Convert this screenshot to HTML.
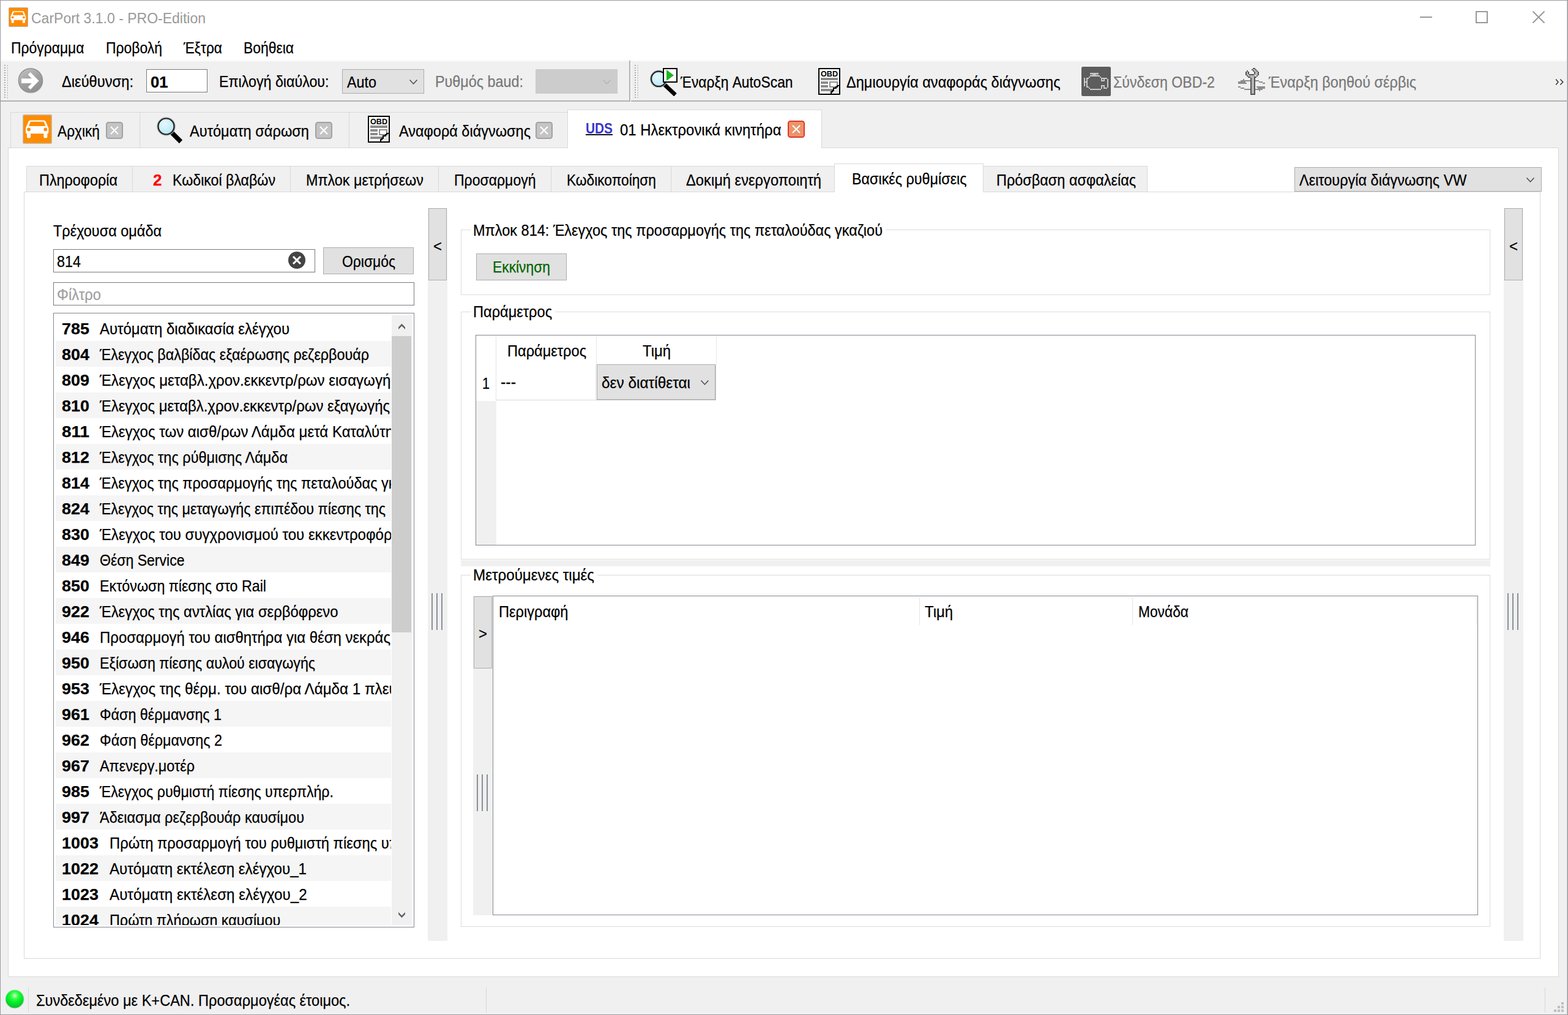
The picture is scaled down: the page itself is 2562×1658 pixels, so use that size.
<!DOCTYPE html>
<html lang="el"><head><meta charset="utf-8"><title>CarPort 3.1.0 - PRO-Edition</title>
<style>
html,body{margin:0;padding:0}
body{width:2562px;height:1658px;position:relative;overflow:hidden;background:#fff;font-family:"Liberation Sans", sans-serif;}
.a{position:absolute;box-sizing:border-box}
.t{position:absolute;white-space:pre;transform-origin:0 0;display:block;-webkit-text-stroke:0.25px currentColor}
</style></head>
<body>
<div class="a" style="left:0px;top:0px;width:2562px;height:1658px;background:#ffffff;"></div>
<div class="a" style="left:0px;top:98px;width:2562px;height:1px;background:#f6f6f6;"></div>
<div class="a" style="left:0px;top:100px;width:2562px;height:64px;background:#f0f0f0;"></div>
<div class="a" style="left:0px;top:164px;width:2562px;height:2px;background:#b2b2b2;"></div>
<div class="a" style="left:0px;top:166px;width:2562px;height:1492px;background:#f0f0f0;"></div>
<div class="a" style="left:1028px;top:99px;width:2px;height:67px;background:#b2b2b2;"></div>
<div class="a" style="left:1030px;top:99px;width:1px;height:67px;background:#ffffff;"></div>
<svg class="a" style="left:14px;top:12px" width="32" height="32" viewBox="0 0 32 32"><rect x="0.5" y="0.5" width="31" height="31" rx="1" fill="#ff8c00" stroke="#b9b3ab" stroke-width="1"/><path d="M3.6 14.2 L6.4 7.6 Q7 6.3 8.4 6.3 L23.2 6.3 Q24.6 6.3 25.2 7.6 L27.9 14.2 Q28.3 15 28.3 16 L28.2 19.6 Q28.2 20.8 27 20.8 L4.6 20.8 Q3.4 20.8 3.4 19.6 L3.3 16 Q3.3 15 3.6 14.2 Z" fill="#fff"/><path d="M6.6 12.7 L8.4 8.3 Q8.6 7.8 9.2 7.8 L22.4 7.8 Q23 7.8 23.2 8.3 L25 12.7 Z" fill="#ff8c00"/><circle cx="6.7" cy="16.3" r="1.9" fill="#ff8c00"/><circle cx="24.9" cy="16.3" r="1.9" fill="#ff8c00"/><path d="M4.7 20.5 L8.7 20.5 L8.7 24.4 Q8.7 25.6 7.5 25.6 L5.9 25.6 Q4.7 25.6 4.7 24.4 Z" fill="#fff"/><path d="M22.9 20.5 L26.9 20.5 L26.9 24.4 Q26.9 25.6 25.7 25.6 L24.1 25.6 Q22.9 25.6 22.9 24.4 Z" fill="#fff"/></svg>
<span class="t " style="left:51px;top:15px;font-size:23px;line-height:30px;color:#999999;transform:scaleX(0.9998);-webkit-text-stroke:0;">CarPort 3.1.0 - PRO-Edition</span>
<div class="a" style="left:2320px;top:27px;width:20px;height:2px;background:#999999;"></div>
<div class="a" style="left:2411px;top:18px;width:20px;height:20px;border:2px solid #999999;"></div>
<svg class="a" style="left:2504px;top:18px;" width="20" height="20" viewBox="0 0 20 20"><path d="M0.5 0.5L19.5 19.5M19.5 0.5L0.5 19.5" stroke="#999999" stroke-width="2" fill="none"/></svg>
<span class="t " style="left:18px;top:63px;font-size:25px;line-height:30px;color:#000;transform:scaleX(0.9148);">Πρόγραμμα</span>
<span class="t " style="left:173px;top:63px;font-size:25px;line-height:30px;color:#000;transform:scaleX(0.9164);">Προβολή</span>
<span class="t " style="left:300px;top:63px;font-size:25px;line-height:30px;color:#000;transform:scaleX(0.9083);">Έξτρα</span>
<span class="t " style="left:398px;top:63px;font-size:25px;line-height:30px;color:#000;transform:scaleX(0.9157);">Βοήθεια</span>
<svg class="a" style="left:7px;top:106px" width="8" height="58" viewBox="0 0 8 58"><rect x="1" y="1" width="2" height="2" fill="#fff"/><rect x="0" y="0" width="2" height="2" fill="#ababab"/><rect x="5" y="1.5" width="1.5" height="1.5" fill="#fff"/><rect x="4.5" y="0.5" width="1.5" height="2" fill="#bcbcbc"/><rect x="1" y="5" width="2" height="2" fill="#fff"/><rect x="0" y="4" width="2" height="2" fill="#ababab"/><rect x="5" y="5.5" width="1.5" height="1.5" fill="#fff"/><rect x="4.5" y="4.5" width="1.5" height="2" fill="#bcbcbc"/><rect x="1" y="9" width="2" height="2" fill="#fff"/><rect x="0" y="8" width="2" height="2" fill="#ababab"/><rect x="5" y="9.5" width="1.5" height="1.5" fill="#fff"/><rect x="4.5" y="8.5" width="1.5" height="2" fill="#bcbcbc"/><rect x="1" y="13" width="2" height="2" fill="#fff"/><rect x="0" y="12" width="2" height="2" fill="#ababab"/><rect x="5" y="13.5" width="1.5" height="1.5" fill="#fff"/><rect x="4.5" y="12.5" width="1.5" height="2" fill="#bcbcbc"/><rect x="1" y="17" width="2" height="2" fill="#fff"/><rect x="0" y="16" width="2" height="2" fill="#ababab"/><rect x="5" y="17.5" width="1.5" height="1.5" fill="#fff"/><rect x="4.5" y="16.5" width="1.5" height="2" fill="#bcbcbc"/><rect x="1" y="21" width="2" height="2" fill="#fff"/><rect x="0" y="20" width="2" height="2" fill="#ababab"/><rect x="5" y="21.5" width="1.5" height="1.5" fill="#fff"/><rect x="4.5" y="20.5" width="1.5" height="2" fill="#bcbcbc"/><rect x="1" y="25" width="2" height="2" fill="#fff"/><rect x="0" y="24" width="2" height="2" fill="#ababab"/><rect x="5" y="25.5" width="1.5" height="1.5" fill="#fff"/><rect x="4.5" y="24.5" width="1.5" height="2" fill="#bcbcbc"/><rect x="1" y="29" width="2" height="2" fill="#fff"/><rect x="0" y="28" width="2" height="2" fill="#ababab"/><rect x="5" y="29.5" width="1.5" height="1.5" fill="#fff"/><rect x="4.5" y="28.5" width="1.5" height="2" fill="#bcbcbc"/><rect x="1" y="33" width="2" height="2" fill="#fff"/><rect x="0" y="32" width="2" height="2" fill="#ababab"/><rect x="5" y="33.5" width="1.5" height="1.5" fill="#fff"/><rect x="4.5" y="32.5" width="1.5" height="2" fill="#bcbcbc"/><rect x="1" y="37" width="2" height="2" fill="#fff"/><rect x="0" y="36" width="2" height="2" fill="#ababab"/><rect x="5" y="37.5" width="1.5" height="1.5" fill="#fff"/><rect x="4.5" y="36.5" width="1.5" height="2" fill="#bcbcbc"/><rect x="1" y="41" width="2" height="2" fill="#fff"/><rect x="0" y="40" width="2" height="2" fill="#ababab"/><rect x="5" y="41.5" width="1.5" height="1.5" fill="#fff"/><rect x="4.5" y="40.5" width="1.5" height="2" fill="#bcbcbc"/><rect x="1" y="45" width="2" height="2" fill="#fff"/><rect x="0" y="44" width="2" height="2" fill="#ababab"/><rect x="5" y="45.5" width="1.5" height="1.5" fill="#fff"/><rect x="4.5" y="44.5" width="1.5" height="2" fill="#bcbcbc"/><rect x="1" y="49" width="2" height="2" fill="#fff"/><rect x="0" y="48" width="2" height="2" fill="#ababab"/><rect x="5" y="49.5" width="1.5" height="1.5" fill="#fff"/><rect x="4.5" y="48.5" width="1.5" height="2" fill="#bcbcbc"/><rect x="1" y="53" width="2" height="2" fill="#fff"/><rect x="0" y="52" width="2" height="2" fill="#ababab"/><rect x="5" y="53.5" width="1.5" height="1.5" fill="#fff"/><rect x="4.5" y="52.5" width="1.5" height="2" fill="#bcbcbc"/></svg>
<svg class="a" style="left:29px;top:111px" width="42" height="42" viewBox="0 0 42 42"><defs><linearGradient id="gg" x1="0.2" y1="0" x2="0.8" y2="1"><stop offset="0" stop-color="#c0c0c0"/><stop offset="0.5" stop-color="#a0a0a0"/><stop offset="1" stop-color="#8e8e8e"/></linearGradient></defs><circle cx="21.6" cy="21.8" r="20" fill="#d8d8d8"/><circle cx="20.9" cy="20.4" r="19.6" fill="url(#gg)" stroke="#8a8a8a" stroke-width="1.2"/><path d="M6 17.3 L26 17.3 L26 25 L6 25 Z" fill="#fff"/><path d="M18.7 9 L30.6 21.1 L18.7 33.2" stroke="#fff" stroke-width="5.6" fill="none" stroke-linejoin="miter"/></svg>
<span class="t " style="left:101px;top:118px;font-size:25px;line-height:30px;color:#000;transform:scaleX(0.9478);">Διεύθυνση:</span>
<div class="a" style="left:239px;top:113px;width:100px;height:38px;background:#fff;border:1px solid #7a7a7a;"></div>
<span class="t " style="left:246px;top:119px;font-size:25px;line-height:30px;color:#000;font-weight:bold;transform:scaleX(1.0247);">01</span>
<span class="t " style="left:358px;top:118px;font-size:25px;line-height:30px;color:#000;transform:scaleX(0.9296);">Επιλογή διαύλου:</span>
<div class="a" style="left:559px;top:113px;width:134px;height:40px;background:#e1e1e1;border:1px solid #adadad;"></div>
<span class="t " style="left:567px;top:119px;font-size:25px;line-height:30px;color:#000;transform:scaleX(0.9332);">Auto</span>
<svg class="a" style="left:669px;top:130px" width="13" height="9" viewBox="0 0 13 9"><path d="M0.5 0.5 L6.5 7 L12.5 0.5" stroke="#444" stroke-width="1.4" fill="none"/></svg>
<span class="t " style="left:711px;top:118px;font-size:25px;line-height:30px;color:#787878;transform:scaleX(0.9343);">Ρυθμός baud:</span>
<div class="a" style="left:875px;top:113px;width:134px;height:40px;background:#cccccc;"></div>
<svg class="a" style="left:985px;top:130px" width="13" height="9" viewBox="0 0 13 9"><path d="M0.5 0.5 L6.5 7 L12.5 0.5" stroke="#b4b4b4" stroke-width="1.4" fill="none"/></svg>
<svg class="a" style="left:1037px;top:106px" width="8" height="58" viewBox="0 0 8 58"><rect x="1" y="1" width="2" height="2" fill="#fff"/><rect x="0" y="0" width="2" height="2" fill="#ababab"/><rect x="5" y="1.5" width="1.5" height="1.5" fill="#fff"/><rect x="4.5" y="0.5" width="1.5" height="2" fill="#bcbcbc"/><rect x="1" y="5" width="2" height="2" fill="#fff"/><rect x="0" y="4" width="2" height="2" fill="#ababab"/><rect x="5" y="5.5" width="1.5" height="1.5" fill="#fff"/><rect x="4.5" y="4.5" width="1.5" height="2" fill="#bcbcbc"/><rect x="1" y="9" width="2" height="2" fill="#fff"/><rect x="0" y="8" width="2" height="2" fill="#ababab"/><rect x="5" y="9.5" width="1.5" height="1.5" fill="#fff"/><rect x="4.5" y="8.5" width="1.5" height="2" fill="#bcbcbc"/><rect x="1" y="13" width="2" height="2" fill="#fff"/><rect x="0" y="12" width="2" height="2" fill="#ababab"/><rect x="5" y="13.5" width="1.5" height="1.5" fill="#fff"/><rect x="4.5" y="12.5" width="1.5" height="2" fill="#bcbcbc"/><rect x="1" y="17" width="2" height="2" fill="#fff"/><rect x="0" y="16" width="2" height="2" fill="#ababab"/><rect x="5" y="17.5" width="1.5" height="1.5" fill="#fff"/><rect x="4.5" y="16.5" width="1.5" height="2" fill="#bcbcbc"/><rect x="1" y="21" width="2" height="2" fill="#fff"/><rect x="0" y="20" width="2" height="2" fill="#ababab"/><rect x="5" y="21.5" width="1.5" height="1.5" fill="#fff"/><rect x="4.5" y="20.5" width="1.5" height="2" fill="#bcbcbc"/><rect x="1" y="25" width="2" height="2" fill="#fff"/><rect x="0" y="24" width="2" height="2" fill="#ababab"/><rect x="5" y="25.5" width="1.5" height="1.5" fill="#fff"/><rect x="4.5" y="24.5" width="1.5" height="2" fill="#bcbcbc"/><rect x="1" y="29" width="2" height="2" fill="#fff"/><rect x="0" y="28" width="2" height="2" fill="#ababab"/><rect x="5" y="29.5" width="1.5" height="1.5" fill="#fff"/><rect x="4.5" y="28.5" width="1.5" height="2" fill="#bcbcbc"/><rect x="1" y="33" width="2" height="2" fill="#fff"/><rect x="0" y="32" width="2" height="2" fill="#ababab"/><rect x="5" y="33.5" width="1.5" height="1.5" fill="#fff"/><rect x="4.5" y="32.5" width="1.5" height="2" fill="#bcbcbc"/><rect x="1" y="37" width="2" height="2" fill="#fff"/><rect x="0" y="36" width="2" height="2" fill="#ababab"/><rect x="5" y="37.5" width="1.5" height="1.5" fill="#fff"/><rect x="4.5" y="36.5" width="1.5" height="2" fill="#bcbcbc"/><rect x="1" y="41" width="2" height="2" fill="#fff"/><rect x="0" y="40" width="2" height="2" fill="#ababab"/><rect x="5" y="41.5" width="1.5" height="1.5" fill="#fff"/><rect x="4.5" y="40.5" width="1.5" height="2" fill="#bcbcbc"/><rect x="1" y="45" width="2" height="2" fill="#fff"/><rect x="0" y="44" width="2" height="2" fill="#ababab"/><rect x="5" y="45.5" width="1.5" height="1.5" fill="#fff"/><rect x="4.5" y="44.5" width="1.5" height="2" fill="#bcbcbc"/><rect x="1" y="49" width="2" height="2" fill="#fff"/><rect x="0" y="48" width="2" height="2" fill="#ababab"/><rect x="5" y="49.5" width="1.5" height="1.5" fill="#fff"/><rect x="4.5" y="48.5" width="1.5" height="2" fill="#bcbcbc"/><rect x="1" y="53" width="2" height="2" fill="#fff"/><rect x="0" y="52" width="2" height="2" fill="#ababab"/><rect x="5" y="53.5" width="1.5" height="1.5" fill="#fff"/><rect x="4.5" y="52.5" width="1.5" height="2" fill="#bcbcbc"/></svg>
<svg class="a" style="left:1060px;top:109px" width="48" height="48" viewBox="0 0 48 48"><defs><radialGradient id="lens2" cx="0.4" cy="0.35" r="0.7"><stop offset="0" stop-color="#e6f8fd"/><stop offset="1" stop-color="#b4e6f5"/></radialGradient></defs><path d="M25.5 29 L43.5 46" stroke="#000" stroke-width="6.6" stroke-linecap="butt"/><circle cx="16.3" cy="19.8" r="13.6" fill="none" stroke="#b0b0b0" stroke-width="1.4"/><circle cx="16.3" cy="19.8" r="12.2" fill="url(#lens2)" stroke="#222" stroke-width="2.2"/><rect x="24" y="3" width="22" height="22" fill="#fff" stroke="#000" stroke-width="2"/><path d="M29 5 L29 23 L41 14 Z" fill="#1fb41f"/></svg>
<span class="t " style="left:1112px;top:119px;font-size:25px;line-height:30px;color:#000;transform:scaleX(0.9119);">Έναρξη AutoScan</span>
<svg class="a" style="left:1337px;top:111px;overflow:visible" width="36" height="44" viewBox="0 0 36 44"><rect x="-1" y="-1" width="38" height="46" fill="#fff" opacity="0.9"/><rect x="1" y="1" width="34" height="42" fill="#fff" stroke="#000" stroke-width="2"/><path d="M22 42 L34 30 L34 42 Z" fill="#e4e4e4"/><text x="4" y="14.2" font-family="Liberation Sans, sans-serif" font-size="13.5" font-weight="bold" fill="#000" textLength="28" lengthAdjust="spacingAndGlyphs">OBD</text><rect x="4" y="16" width="28" height="4" fill="#8c8c8c"/><rect x="4" y="22" width="12" height="4" fill="#8c8c8c"/><rect x="4" y="28" width="12" height="4" fill="#8c8c8c"/><rect x="4" y="34" width="20" height="4" fill="#8c8c8c"/><rect x="19" y="23" width="12" height="8" fill="#fff" stroke="#8c8c8c" stroke-width="2"/><path d="M34 29 L31 29 L31 31 L29 31 L29 33 L25 33 L25 37 L23 37 L23 39 L21 39 L21 42" stroke="#000" stroke-width="2" fill="none" shape-rendering="crispEdges"/></svg>
<span class="t " style="left:1383px;top:119px;font-size:25px;line-height:30px;color:#000;transform:scaleX(0.9425);">Δημιουργία αναφοράς διάγνωσης</span>
<svg class="a" style="left:1767px;top:109px" width="48" height="48" viewBox="0 0 48 48" shape-rendering="crispEdges"><rect x="0" y="0" width="48" height="48" rx="2.5" fill="#5d5d5d" shape-rendering="auto"/><rect x="14" y="10" width="14" height="2" fill="#c8c8c8"/><rect x="18" y="12" width="6" height="2" fill="#c0c0c0"/><rect x="14" y="12" width="4" height="2" fill="#8a8a8a"/><rect x="24" y="12" width="4" height="2" fill="#8a8a8a"/><rect x="14" y="14" width="16" height="2" fill="#c8c8c8"/><rect x="12" y="16" width="2" height="2" fill="#c8c8c8"/><rect x="30" y="16" width="2" height="2" fill="#c8c8c8"/><rect x="4" y="18" width="2" height="14" fill="#c8c8c8"/><rect x="6" y="24" width="2" height="2" fill="#c8c8c8"/><rect x="8" y="18" width="2" height="16" fill="#c8c8c8"/><rect x="10" y="18" width="2" height="2" fill="#c8c8c8"/><rect x="10" y="32" width="2" height="2" fill="#c8c8c8"/><rect x="12" y="34" width="2" height="2" fill="#c8c8c8"/><rect x="14" y="36" width="18" height="2" fill="#c8c8c8"/><rect x="32" y="18" width="10" height="2" fill="#c8c8c8"/><rect x="32" y="18" width="2" height="6" fill="#c8c8c8"/><rect x="32" y="22" width="6" height="2" fill="#c8c8c8"/><rect x="36" y="20" width="2" height="4" fill="#c8c8c8"/><rect x="42" y="20" width="2" height="14" fill="#c8c8c8"/><rect x="36" y="34" width="6" height="2" fill="#c8c8c8"/><rect x="32" y="30" width="6" height="2" fill="#c8c8c8"/><rect x="32" y="30" width="2" height="6" fill="#c8c8c8"/><rect x="36" y="30" width="2" height="6" fill="#c8c8c8"/></svg>
<span class="t " style="left:1819px;top:119px;font-size:25px;line-height:30px;color:#787878;transform:scaleX(0.9254);">Σύνδεση OBD-2</span>
<svg class="a" style="left:2021px;top:109px" width="48" height="48" viewBox="0 0 48 48" shape-rendering="crispEdges"><rect x="10" y="20" width="2" height="2" fill="#8c8c8c"/><rect x="6" y="22" width="16" height="2" fill="#8c8c8c"/><rect x="2" y="24" width="12" height="2" fill="#8c8c8c"/><rect x="2" y="26" width="14" height="2" fill="#8c8c8c"/><rect x="30" y="22" width="6" height="2" fill="#8c8c8c"/><rect x="36" y="24" width="6" height="2" fill="#8c8c8c"/><rect x="42" y="26" width="4" height="2" fill="#8c8c8c"/><rect x="2" y="32" width="4" height="2" fill="#8c8c8c"/><rect x="6" y="34" width="6" height="2" fill="#8c8c8c"/><rect x="12" y="36" width="30" height="2" fill="#8c8c8c"/><rect x="32" y="32" width="14" height="2" fill="#8c8c8c"/><rect x="34" y="34" width="12" height="2" fill="#8c8c8c"/><rect x="36" y="38" width="2" height="2" fill="#8c8c8c"/><rect x="26" y="4" width="4" height="2" fill="#b6b6b6"/><rect x="28" y="6" width="4" height="2" fill="#b6b6b6"/><rect x="16" y="8" width="2" height="6" fill="#b6b6b6"/><rect x="30" y="8" width="4" height="6" fill="#b6b6b6"/><rect x="18" y="12" width="2" height="4" fill="#b6b6b6"/><rect x="20" y="14" width="10" height="2" fill="#b6b6b6"/><rect x="28" y="12" width="2" height="2" fill="#b6b6b6"/><rect x="22" y="16" width="6" height="2" fill="#b6b6b6"/><rect x="24" y="18" width="4" height="26" fill="#b6b6b6"/><rect x="26" y="2" width="4" height="2" fill="#555555"/><rect x="24" y="4" width="2" height="2" fill="#555555"/><rect x="30" y="4" width="2" height="2" fill="#555555"/><rect x="16" y="6" width="2" height="2" fill="#555555"/><rect x="26" y="6" width="2" height="2" fill="#555555"/><rect x="32" y="6" width="2" height="2" fill="#555555"/><rect x="14" y="8" width="2" height="6" fill="#555555"/><rect x="18" y="8" width="2" height="4" fill="#555555"/><rect x="28" y="8" width="2" height="4" fill="#555555"/><rect x="34" y="8" width="2" height="6" fill="#555555"/><rect x="20" y="12" width="8" height="2" fill="#555555"/><rect x="16" y="14" width="2" height="2" fill="#555555"/><rect x="32" y="14" width="2" height="2" fill="#555555"/><rect x="18" y="16" width="4" height="2" fill="#555555"/><rect x="28" y="16" width="4" height="2" fill="#555555"/><rect x="22" y="18" width="2" height="28" fill="#555555"/><rect x="28" y="18" width="2" height="28" fill="#555555"/><rect x="22" y="44" width="8" height="2" fill="#555555"/></svg>
<span class="t " style="left:2073px;top:119px;font-size:25px;line-height:30px;color:#787878;transform:scaleX(0.9406);">Έναρξη βοηθού σέρβις</span>
<svg class="a" style="left:2540px;top:127px;" width="16" height="14" viewBox="0 0 16 14"><path d="M2.2 2.5 L6 7 L2.2 11.5 M9.4 2.5 L13.8 7 L9.4 11.5" stroke="#333" stroke-width="1.5" fill="none"/></svg>
<div class="a" style="left:17px;top:183px;width:212px;height:59px;background:#f0f0f0;border:1px solid #d9d9d9;"></div>
<div class="a" style="left:228px;top:183px;width:343px;height:59px;background:#f0f0f0;border:1px solid #d9d9d9;"></div>
<div class="a" style="left:570px;top:183px;width:358px;height:59px;background:#f0f0f0;border:1px solid #d9d9d9;"></div>
<div class="a" style="left:13px;top:241px;width:2534px;height:1355px;background:#ffffff;border:1px solid #d9d9d9;"></div>
<div class="a" style="left:927px;top:179px;width:416px;height:63px;background:#ffffff;border:1px solid #d9d9d9;border-bottom:none;"></div>
<svg class="a" style="left:37px;top:187px" width="48" height="48" viewBox="0 0 32 32"><rect x="0.5" y="0.5" width="31" height="31" rx="1" fill="#ff8c00" stroke="#c8b8a0" stroke-width="1"/><path d="M3.6 14.2 L6.4 7.6 Q7 6.3 8.4 6.3 L23.2 6.3 Q24.6 6.3 25.2 7.6 L27.9 14.2 Q28.3 15 28.3 16 L28.2 19.6 Q28.2 20.8 27 20.8 L4.6 20.8 Q3.4 20.8 3.4 19.6 L3.3 16 Q3.3 15 3.6 14.2 Z" fill="#fff"/><path d="M6.6 12.7 L8.4 8.3 Q8.6 7.8 9.2 7.8 L22.4 7.8 Q23 7.8 23.2 8.3 L25 12.7 Z" fill="#ff8c00"/><circle cx="6.7" cy="16.3" r="1.9" fill="#ff8c00"/><circle cx="24.9" cy="16.3" r="1.9" fill="#ff8c00"/><path d="M4.7 20.5 L8.7 20.5 L8.7 24.4 Q8.7 25.6 7.5 25.6 L5.9 25.6 Q4.7 25.6 4.7 24.4 Z" fill="#fff"/><path d="M22.9 20.5 L26.9 20.5 L26.9 24.4 Q26.9 25.6 25.7 25.6 L24.1 25.6 Q22.9 25.6 22.9 24.4 Z" fill="#fff"/></svg>
<span class="t " style="left:94px;top:199px;font-size:25px;line-height:30px;color:#000;transform:scaleX(0.9081);">Αρχική</span>
<svg class="a" style="left:173px;top:199px" width="28" height="28" viewBox="0 0 28 28"><rect x="1" y="1" width="26" height="26" rx="3.5" fill="#c4c4c4" stroke="#a2a2a2" stroke-width="2"/><path d="M8 8 L20 20 M20 8 L8 20" stroke="#fff" stroke-width="2.2" fill="none"/></svg>
<svg class="a" style="left:255px;top:190px" width="46" height="46" viewBox="0 0 46 46"><defs><radialGradient id="lens" cx="0.4" cy="0.35" r="0.7"><stop offset="0" stop-color="#e6f8fd"/><stop offset="1" stop-color="#b4e6f5"/></radialGradient></defs><path d="M25 26 L40.5 41.5" stroke="#000" stroke-width="7.5" stroke-linecap="butt"/><circle cx="16.5" cy="16.5" r="14.6" fill="none" stroke="#b0b0b0" stroke-width="1.4"/><circle cx="16.5" cy="16.5" r="13" fill="url(#lens)" stroke="#222" stroke-width="2.2"/></svg>
<span class="t " style="left:310px;top:199px;font-size:25px;line-height:30px;color:#000;transform:scaleX(0.9435);">Αυτόματη σάρωση</span>
<svg class="a" style="left:515px;top:199px" width="28" height="28" viewBox="0 0 28 28"><rect x="1" y="1" width="26" height="26" rx="3.5" fill="#c4c4c4" stroke="#a2a2a2" stroke-width="2"/><path d="M8 8 L20 20 M20 8 L8 20" stroke="#fff" stroke-width="2.2" fill="none"/></svg>
<svg class="a" style="left:601px;top:189px;overflow:visible" width="36" height="44" viewBox="0 0 36 44"><rect x="1" y="1" width="34" height="42" fill="#fff" stroke="#000" stroke-width="2"/><path d="M22 42 L34 30 L34 42 Z" fill="#e4e4e4"/><text x="4" y="14.2" font-family="Liberation Sans, sans-serif" font-size="13.5" font-weight="bold" fill="#000" textLength="28" lengthAdjust="spacingAndGlyphs">OBD</text><rect x="4" y="16" width="28" height="4" fill="#8c8c8c"/><rect x="4" y="22" width="12" height="4" fill="#8c8c8c"/><rect x="4" y="28" width="12" height="4" fill="#8c8c8c"/><rect x="4" y="34" width="20" height="4" fill="#8c8c8c"/><rect x="19" y="23" width="12" height="8" fill="#fff" stroke="#8c8c8c" stroke-width="2"/><path d="M34 29 L31 29 L31 31 L29 31 L29 33 L25 33 L25 37 L23 37 L23 39 L21 39 L21 42" stroke="#000" stroke-width="2" fill="none" shape-rendering="crispEdges"/></svg>
<span class="t " style="left:652px;top:199px;font-size:25px;line-height:30px;color:#000;transform:scaleX(0.9399);">Αναφορά διάγνωσης</span>
<svg class="a" style="left:875px;top:199px" width="28" height="28" viewBox="0 0 28 28"><rect x="1" y="1" width="26" height="26" rx="3.5" fill="#c4c4c4" stroke="#a2a2a2" stroke-width="2"/><path d="M8 8 L20 20 M20 8 L8 20" stroke="#fff" stroke-width="2.2" fill="none"/></svg>
<span class="t " style="left:957px;top:195px;font-size:23px;line-height:30px;color:#3737c8;font-weight:bold;transform:scaleX(0.9060);-webkit-text-stroke:0;">UDS</span>
<div class="a" style="left:957px;top:219px;width:44px;height:2px;background:#101018;"></div>
<span class="t " style="left:1012.5px;top:197px;font-size:25px;line-height:30px;color:#000;transform:scaleX(0.9564);">01 Ηλεκτρονικά κινητήρα</span>
<svg class="a" style="left:1287px;top:197px" width="28" height="28" viewBox="0 0 28 28"><rect x="1" y="1" width="26" height="26" rx="3.5" fill="#ec9469" stroke="#e0382c" stroke-width="2"/><path d="M8 8 L20 20 M20 8 L8 20" stroke="#fff" stroke-width="2.2" fill="none"/></svg>
<div class="a" style="left:43px;top:271px;width:174px;height:43px;background:#f0f0f0;border:1px solid #d9d9d9;"></div>
<div class="a" style="left:216px;top:271px;width:259px;height:43px;background:#f0f0f0;border:1px solid #d9d9d9;"></div>
<div class="a" style="left:474px;top:271px;width:243px;height:43px;background:#f0f0f0;border:1px solid #d9d9d9;"></div>
<div class="a" style="left:716px;top:271px;width:185px;height:43px;background:#f0f0f0;border:1px solid #d9d9d9;"></div>
<div class="a" style="left:900px;top:271px;width:197px;height:43px;background:#f0f0f0;border:1px solid #d9d9d9;"></div>
<div class="a" style="left:1096px;top:271px;width:268px;height:43px;background:#f0f0f0;border:1px solid #d9d9d9;"></div>
<div class="a" style="left:1606px;top:271px;width:269px;height:43px;background:#f0f0f0;border:1px solid #d9d9d9;"></div>
<div class="a" style="left:39px;top:313px;width:2478px;height:1253px;background:#ffffff;border:1px solid #d9d9d9;"></div>
<div class="a" style="left:1363px;top:267px;width:244px;height:47px;background:#ffffff;border:1px solid #d9d9d9;border-bottom:none;"></div>
<span class="t " style="left:64px;top:279px;font-size:25px;line-height:30px;color:#000;transform:scaleX(0.9347);">Πληροφορία</span>
<span class="t " style="left:250px;top:279px;font-size:25px;line-height:30px;color:#ff0000;font-weight:bold;transform:scaleX(1.0427);">2</span>
<span class="t " style="left:282px;top:279px;font-size:25px;line-height:30px;color:#000;transform:scaleX(0.9266);">Κωδικοί βλαβών</span>
<span class="t " style="left:500px;top:279px;font-size:25px;line-height:30px;color:#000;transform:scaleX(0.9334);">Μπλοκ μετρήσεων</span>
<span class="t " style="left:742px;top:279px;font-size:25px;line-height:30px;color:#000;transform:scaleX(0.9207);">Προσαρμογή</span>
<span class="t " style="left:926px;top:279px;font-size:25px;line-height:30px;color:#000;transform:scaleX(0.9085);">Κωδικοποίηση</span>
<span class="t " style="left:1121px;top:279px;font-size:25px;line-height:30px;color:#000;transform:scaleX(0.9484);">Δοκιμή ενεργοποιητή</span>
<span class="t " style="left:1392px;top:277px;font-size:25px;line-height:30px;color:#000;transform:scaleX(0.9343);">Βασικές ρυθμίσεις</span>
<span class="t " style="left:1628px;top:279px;font-size:25px;line-height:30px;color:#000;transform:scaleX(0.9384);">Πρόσβαση ασφαλείας</span>
<div class="a" style="left:2115px;top:273px;width:404px;height:40px;background:#e1e1e1;border:1px solid #adadad;"></div>
<span class="t " style="left:2123px;top:279px;font-size:25px;line-height:30px;color:#000;transform:scaleX(0.9392);">Λειτουργία διάγνωσης VW</span>
<svg class="a" style="left:2494px;top:290px" width="13" height="9" viewBox="0 0 13 9"><path d="M0.5 0.5 L6.5 7 L12.5 0.5" stroke="#444" stroke-width="1.4" fill="none"/></svg>
<span class="t " style="left:87px;top:362px;font-size:25px;line-height:30px;color:#000;transform:scaleX(0.9384);">Τρέχουσα ομάδα</span>
<div class="a" style="left:87px;top:407px;width:428px;height:38px;background:#fff;border:1px solid #7a7a7a;"></div>
<span class="t " style="left:93px;top:412px;font-size:25px;line-height:30px;color:#000;transform:scaleX(0.9348);">814</span>
<svg class="a" style="left:471px;top:411px" width="28" height="28" viewBox="0 0 28 28"><circle cx="14" cy="14" r="14" fill="#444"/><path d="M8 8 L20 20 M20 8 L8 20" stroke="#fff" stroke-width="3.1" fill="none"/></svg>
<div class="a" style="left:528px;top:404px;width:148px;height:44px;background:#e1e1e1;border:1px solid #adadad;"></div>
<span class="t " style="left:559px;top:412px;font-size:25px;line-height:30px;color:#000;transform:scaleX(0.9156);">Ορισμός</span>
<div class="a" style="left:87px;top:461px;width:590px;height:38px;background:#fff;border:1px solid #7a7a7a;"></div>
<span class="t " style="left:93px;top:466px;font-size:25px;line-height:30px;color:#a0a0a0;transform:scaleX(0.9472);">Φίλτρο</span>
<div class="a" style="left:87px;top:511px;width:590px;height:1004px;background:#fff;border:1px solid #828790;"></div>
<div class="a" style="left:91px;top:515px;width:548px;height:996px;overflow:hidden">
<span class="t " style="left:10px;top:7px;font-size:25px;line-height:30px;color:#000;font-weight:bold;transform:scaleX(1.0787);">785</span>
<span class="t " style="left:71.5px;top:7px;font-size:25px;line-height:30px;color:#000;transform:scaleX(0.9584);">Αυτόματη διαδικασία ελέγχου</span>
<div class="a" style="left:0px;top:42px;width:548px;height:42px;background:#f5f5f5;"></div>
<span class="t " style="left:10px;top:49px;font-size:25px;line-height:30px;color:#000;font-weight:bold;transform:scaleX(1.0787);">804</span>
<span class="t " style="left:71.5px;top:49px;font-size:25px;line-height:30px;color:#000;transform:scaleX(0.9333);">Έλεγχος βαλβίδας εξαέρωσης ρεζερβουάρ</span>
<span class="t " style="left:10px;top:91px;font-size:25px;line-height:30px;color:#000;font-weight:bold;transform:scaleX(1.0787);">809</span>
<span class="t " style="left:71.5px;top:91px;font-size:25px;line-height:30px;color:#000;transform:scaleX(0.9618);">Έλεγχος μεταβλ.χρον.εκκεντρ/ρων εισαγωγής</span>
<div class="a" style="left:0px;top:126px;width:548px;height:42px;background:#f5f5f5;"></div>
<span class="t " style="left:10px;top:133px;font-size:25px;line-height:30px;color:#000;font-weight:bold;transform:scaleX(1.0787);">810</span>
<span class="t " style="left:71.5px;top:133px;font-size:25px;line-height:30px;color:#000;transform:scaleX(0.9561);">Έλεγχος μεταβλ.χρον.εκκεντρ/ρων εξαγωγής</span>
<span class="t " style="left:10px;top:175px;font-size:25px;line-height:30px;color:#000;font-weight:bold;transform:scaleX(1.1154);">811</span>
<span class="t " style="left:71.5px;top:175px;font-size:25px;line-height:30px;color:#000;transform:scaleX(0.9617);">Έλεγχος των αισθ/ρων Λάμδα μετά Καταλύτη</span>
<div class="a" style="left:0px;top:210px;width:548px;height:42px;background:#f5f5f5;"></div>
<span class="t " style="left:10px;top:217px;font-size:25px;line-height:30px;color:#000;font-weight:bold;transform:scaleX(1.0787);">812</span>
<span class="t " style="left:71.5px;top:217px;font-size:25px;line-height:30px;color:#000;transform:scaleX(0.9402);">Έλεγχος της ρύθμισης Λάμδα</span>
<span class="t " style="left:10px;top:259px;font-size:25px;line-height:30px;color:#000;font-weight:bold;transform:scaleX(1.0787);">814</span>
<span class="t " style="left:71.5px;top:259px;font-size:25px;line-height:30px;color:#000;transform:scaleX(0.9402);">Έλεγχος της προσαρμογής της πεταλούδας γκαζιού</span>
<div class="a" style="left:0px;top:294px;width:548px;height:42px;background:#f5f5f5;"></div>
<span class="t " style="left:10px;top:301px;font-size:25px;line-height:30px;color:#000;font-weight:bold;transform:scaleX(1.0787);">824</span>
<span class="t " style="left:71.5px;top:301px;font-size:25px;line-height:30px;color:#000;transform:scaleX(0.9345);">Έλεγχος της μεταγωγής επιπέδου πίεσης της</span>
<span class="t " style="left:10px;top:343px;font-size:25px;line-height:30px;color:#000;font-weight:bold;transform:scaleX(1.0787);">830</span>
<span class="t " style="left:71.5px;top:343px;font-size:25px;line-height:30px;color:#000;transform:scaleX(0.9618);">Έλεγχος του συγχρονισμού του εκκεντροφόρου</span>
<div class="a" style="left:0px;top:378px;width:548px;height:42px;background:#f5f5f5;"></div>
<span class="t " style="left:10px;top:385px;font-size:25px;line-height:30px;color:#000;font-weight:bold;transform:scaleX(1.0787);">849</span>
<span class="t " style="left:71.5px;top:385px;font-size:25px;line-height:30px;color:#000;transform:scaleX(0.9219);">Θέση Service</span>
<span class="t " style="left:10px;top:427px;font-size:25px;line-height:30px;color:#000;font-weight:bold;transform:scaleX(1.0787);">850</span>
<span class="t " style="left:71.5px;top:427px;font-size:25px;line-height:30px;color:#000;transform:scaleX(0.9302);">Εκτόνωση πίεσης στο Rail</span>
<div class="a" style="left:0px;top:462px;width:548px;height:42px;background:#f5f5f5;"></div>
<span class="t " style="left:10px;top:469px;font-size:25px;line-height:30px;color:#000;font-weight:bold;transform:scaleX(1.0787);">922</span>
<span class="t " style="left:71.5px;top:469px;font-size:25px;line-height:30px;color:#000;transform:scaleX(0.9530);">Έλεγχος της αντλίας για σερβόφρενο</span>
<span class="t " style="left:10px;top:511px;font-size:25px;line-height:30px;color:#000;font-weight:bold;transform:scaleX(1.0787);">946</span>
<span class="t " style="left:71.5px;top:511px;font-size:25px;line-height:30px;color:#000;transform:scaleX(0.9571);">Προσαρμογή του αισθητήρα για θέση νεκράς</span>
<div class="a" style="left:0px;top:546px;width:548px;height:42px;background:#f5f5f5;"></div>
<span class="t " style="left:10px;top:553px;font-size:25px;line-height:30px;color:#000;font-weight:bold;transform:scaleX(1.0787);">950</span>
<span class="t " style="left:71.5px;top:553px;font-size:25px;line-height:30px;color:#000;transform:scaleX(0.9294);">Εξίσωση πίεσης αυλού εισαγωγής</span>
<span class="t " style="left:10px;top:595px;font-size:25px;line-height:30px;color:#000;font-weight:bold;transform:scaleX(1.0787);">953</span>
<span class="t " style="left:71.5px;top:595px;font-size:25px;line-height:30px;color:#000;transform:scaleX(0.9669);">Έλεγχος της θέρμ. του αισθ/ρα Λάμδα 1 πλευράς</span>
<div class="a" style="left:0px;top:630px;width:548px;height:42px;background:#f5f5f5;"></div>
<span class="t " style="left:10px;top:637px;font-size:25px;line-height:30px;color:#000;font-weight:bold;transform:scaleX(1.0787);">961</span>
<span class="t " style="left:71.5px;top:637px;font-size:25px;line-height:30px;color:#000;transform:scaleX(0.9319);">Φάση θέρμανσης 1</span>
<span class="t " style="left:10px;top:679px;font-size:25px;line-height:30px;color:#000;font-weight:bold;transform:scaleX(1.0787);">962</span>
<span class="t " style="left:71.5px;top:679px;font-size:25px;line-height:30px;color:#000;transform:scaleX(0.9366);">Φάση θέρμανσης 2</span>
<div class="a" style="left:0px;top:714px;width:548px;height:42px;background:#f5f5f5;"></div>
<span class="t " style="left:10px;top:721px;font-size:25px;line-height:30px;color:#000;font-weight:bold;transform:scaleX(1.0787);">967</span>
<span class="t " style="left:71.5px;top:721px;font-size:25px;line-height:30px;color:#000;transform:scaleX(0.9361);">Απενεργ.μοτέρ</span>
<span class="t " style="left:10px;top:763px;font-size:25px;line-height:30px;color:#000;font-weight:bold;transform:scaleX(1.0787);">985</span>
<span class="t " style="left:71.5px;top:763px;font-size:25px;line-height:30px;color:#000;transform:scaleX(0.9271);">Έλεγχος ρυθμιστή πίεσης υπερπλήρ.</span>
<div class="a" style="left:0px;top:798px;width:548px;height:42px;background:#f5f5f5;"></div>
<span class="t " style="left:10px;top:805px;font-size:25px;line-height:30px;color:#000;font-weight:bold;transform:scaleX(1.0787);">997</span>
<span class="t " style="left:71.5px;top:805px;font-size:25px;line-height:30px;color:#000;transform:scaleX(0.9392);">Άδειασμα ρεζερβουάρ καυσίμου</span>
<span class="t " style="left:10px;top:847px;font-size:25px;line-height:30px;color:#000;font-weight:bold;transform:scaleX(1.0787);">1003</span>
<span class="t " style="left:88px;top:847px;font-size:25px;line-height:30px;color:#000;transform:scaleX(0.9490);">Πρώτη προσαρμογή του ρυθμιστή πίεσης υπερπλήρωσης</span>
<div class="a" style="left:0px;top:882px;width:548px;height:42px;background:#f5f5f5;"></div>
<span class="t " style="left:10px;top:889px;font-size:25px;line-height:30px;color:#000;font-weight:bold;transform:scaleX(1.0787);">1022</span>
<span class="t " style="left:88px;top:889px;font-size:25px;line-height:30px;color:#000;transform:scaleX(0.9657);">Αυτόματη εκτέλεση ελέγχου_1</span>
<span class="t " style="left:10px;top:931px;font-size:25px;line-height:30px;color:#000;font-weight:bold;transform:scaleX(1.0787);">1023</span>
<span class="t " style="left:88px;top:931px;font-size:25px;line-height:30px;color:#000;transform:scaleX(0.9678);">Αυτόματη εκτέλεση ελέγχου_2</span>
<div class="a" style="left:0px;top:966px;width:548px;height:42px;background:#f5f5f5;"></div>
<span class="t " style="left:10px;top:973px;font-size:25px;line-height:30px;color:#000;font-weight:bold;transform:scaleX(1.0787);">1024</span>
<span class="t " style="left:88px;top:973px;font-size:25px;line-height:30px;color:#000;transform:scaleX(0.9337);">Πρώτη πλήρωση καυσίμου</span>
</div>
<div class="a" style="left:640px;top:515px;width:33px;height:996px;background:#f0f0f0;"></div>
<div class="a" style="left:640px;top:549px;width:32px;height:484px;background:#cdcdcd;"></div>
<svg class="a" style="left:651px;top:528px" width="12" height="11" viewBox="0 0 12 11"><path d="M5.5 0.8 L11 6.4 L11 10 L5.5 4.6 L0 10 L0 6.4 Z" fill="#606060"/></svg>
<svg class="a" style="left:651px;top:1489px" width="12" height="11" viewBox="0 0 12 11"><path d="M5.5 10.2 L11 4.6 L11 1 L5.5 6.4 L0 1 L0 4.6 Z" fill="#606060"/></svg>
<div class="a" style="left:699px;top:340px;width:32px;height:1197px;background:#f0f0f0;"></div>
<div class="a" style="left:700px;top:340px;width:30px;height:118px;background:#e1e1e1;border:1px solid #adadad;"></div>
<span class="t " style="left:708px;top:387px;font-size:25px;line-height:30px;color:#000;transform:scaleX(0.9583);">&lt;</span>
<div class="a" style="left:705px;top:969px;width:2px;height:60px;background:#8a8f98;"></div>
<div class="a" style="left:713px;top:969px;width:2px;height:60px;background:#8a8f98;"></div>
<div class="a" style="left:721px;top:969px;width:2px;height:60px;background:#8a8f98;"></div>
<div class="a" style="left:2457px;top:340px;width:32px;height:1197px;background:#f0f0f0;"></div>
<div class="a" style="left:2458px;top:340px;width:30px;height:118px;background:#e1e1e1;border:1px solid #adadad;"></div>
<span class="t " style="left:2466px;top:387px;font-size:25px;line-height:30px;color:#000;transform:scaleX(0.9583);">&lt;</span>
<div class="a" style="left:2463px;top:969px;width:2px;height:60px;background:#8a8f98;"></div>
<div class="a" style="left:2471px;top:969px;width:2px;height:60px;background:#8a8f98;"></div>
<div class="a" style="left:2479px;top:969px;width:2px;height:60px;background:#8a8f98;"></div>
<div class="a" style="left:753px;top:375px;width:1682px;height:107px;border:1px solid #dcdcdc;"></div>
<div class="a" style="left:769px;top:366px;width:678px;height:24px;background:#fff;"></div>
<span class="t " style="left:773px;top:361px;font-size:25px;line-height:30px;color:#000;transform:scaleX(0.9406);">Μπλοκ 814: Έλεγχος της προσαρμογής της πεταλούδας γκαζιού</span>
<div class="a" style="left:778px;top:414px;width:148px;height:44px;background:#e1e1e1;border:1px solid #adadad;"></div>
<span class="t " style="left:805px;top:421px;font-size:25px;line-height:30px;color:#006400;transform:scaleX(0.9129);">Εκκίνηση</span>
<div class="a" style="left:753px;top:509px;width:1682px;height:405px;border:1px solid #dcdcdc;"></div>
<div class="a" style="left:769px;top:499px;width:138px;height:24px;background:#fff;"></div>
<span class="t " style="left:773px;top:494px;font-size:25px;line-height:30px;color:#000;transform:scaleX(0.9431);">Παράμετρος</span>
<div class="a" style="left:777px;top:547px;width:1634px;height:344px;background:#fff;border:1px solid #828790;"></div>
<div class="a" style="left:778px;top:655px;width:33px;height:235px;background:#f0f0f0;"></div>
<div class="a" style="left:810px;top:549px;width:1px;height:105px;background:#e5e5e5;"></div>
<div class="a" style="left:974px;top:549px;width:1px;height:47px;background:#e5e5e5;"></div>
<div class="a" style="left:973px;top:596px;width:1px;height:58px;background:#e0e0e0;"></div>
<div class="a" style="left:1170px;top:549px;width:1px;height:47px;background:#e5e5e5;"></div>
<div class="a" style="left:811px;top:653px;width:164px;height:1px;background:#d8d8d8;"></div>
<span class="t " style="left:828.5px;top:558px;font-size:25px;line-height:30px;color:#000;transform:scaleX(0.9431);">Παράμετρος</span>
<span class="t " style="left:1049.5px;top:558px;font-size:25px;line-height:30px;color:#000;transform:scaleX(0.9540);">Τιμή</span>
<span class="t " style="left:788px;top:611px;font-size:25px;line-height:30px;color:#000;transform:scaleX(0.8629);">1</span>
<span class="t " style="left:817.5px;top:609px;font-size:25px;line-height:30px;color:#000;transform:scaleX(1.0006);">---</span>
<div class="a" style="left:975px;top:595px;width:194px;height:58px;background:#e1e1e1;border:1px solid #adadad;"></div>
<div class="a" style="left:975px;top:653px;width:195px;height:1px;background:#c8c8c8;"></div>
<div class="a" style="left:1169px;top:596px;width:1px;height:58px;background:#c8c8c8;"></div>
<span class="t " style="left:983px;top:610px;font-size:25px;line-height:30px;color:#000;transform:scaleX(0.9768);">δεν διατίθεται</span>
<svg class="a" style="left:1145px;top:621px" width="13" height="9" viewBox="0 0 13 9"><path d="M0.5 0.5 L6.5 7 L12.5 0.5" stroke="#444" stroke-width="1.4" fill="none"/></svg>
<div class="a" style="left:753px;top:915px;width:1682px;height:10px;background:#f0f0f0;"></div>
<div class="a" style="left:753px;top:939px;width:1682px;height:575px;border:1px solid #dcdcdc;"></div>
<div class="a" style="left:769px;top:929px;width:207px;height:24px;background:#fff;"></div>
<span class="t " style="left:773px;top:924px;font-size:25px;line-height:30px;color:#000;transform:scaleX(0.9665);">Μετρούμενες τιμές</span>
<div class="a" style="left:773px;top:973px;width:32px;height:522px;background:#f0f0f0;"></div>
<div class="a" style="left:774px;top:974px;width:30px;height:118px;background:#e1e1e1;border:1px solid #adadad;"></div>
<span class="t " style="left:782px;top:1020px;font-size:25px;line-height:30px;color:#000;transform:scaleX(0.9583);">&gt;</span>
<div class="a" style="left:779px;top:1265px;width:2px;height:60px;background:#8a8f98;"></div>
<div class="a" style="left:787px;top:1265px;width:2px;height:60px;background:#8a8f98;"></div>
<div class="a" style="left:795px;top:1265px;width:2px;height:60px;background:#8a8f98;"></div>
<div class="a" style="left:805px;top:973px;width:1610px;height:522px;background:#fff;border:1px solid #828790;"></div>
<span class="t " style="left:815px;top:984px;font-size:25px;line-height:30px;color:#000;transform:scaleX(0.9437);">Περιγραφή</span>
<div class="a" style="left:1502px;top:976px;width:1px;height:45px;background:#e5e5e5;"></div>
<span class="t " style="left:1511px;top:984px;font-size:25px;line-height:30px;color:#000;transform:scaleX(0.9540);">Τιμή</span>
<div class="a" style="left:1850px;top:976px;width:1px;height:45px;background:#e5e5e5;"></div>
<span class="t " style="left:1859.5px;top:984px;font-size:25px;line-height:30px;color:#000;transform:scaleX(0.9105);">Μονάδα</span>
<div class="a" style="left:2412px;top:976px;width:1px;height:45px;background:#e5e5e5;"></div>
<svg class="a" style="left:8px;top:1616px" width="32" height="32" viewBox="0 0 32 32"><defs><radialGradient id="led" cx="0.5" cy="0.32" r="0.68" fx="0.5" fy="0.3"><stop offset="0" stop-color="#d8ffd8"/><stop offset="0.1" stop-color="#9cff9c"/><stop offset="0.3" stop-color="#2cff40"/><stop offset="0.6" stop-color="#00ee28"/><stop offset="1" stop-color="#16b830"/></radialGradient></defs><circle cx="16" cy="16" r="15.6" fill="#7fdc8a" opacity="0.45"/><circle cx="16" cy="16" r="14.6" fill="url(#led)"/></svg>
<div class="a" style="left:46px;top:1613px;width:1px;height:41px;background:#d7d7d7;"></div>
<span class="t " style="left:58.5px;top:1619px;font-size:25px;line-height:30px;color:#000;transform:scaleX(0.9427);">Συνδεδεμένο με K+CAN. Προσαρμογέας έτοιμος.</span>
<div class="a" style="left:794px;top:1613px;width:1px;height:41px;background:#d7d7d7;"></div>
<div class="a" style="left:2524px;top:1613px;width:1px;height:41px;background:#d7d7d7;"></div>
<svg class="a" style="left:2539px;top:1637px" width="16" height="16" viewBox="0 0 16 16"><rect x="12" y="0" width="4" height="4" fill="#bfbfbf"/><rect x="6" y="6" width="4" height="4" fill="#bfbfbf"/><rect x="12" y="6" width="4" height="4" fill="#bfbfbf"/><rect x="0" y="12" width="4" height="4" fill="#bfbfbf"/><rect x="6" y="12" width="4" height="4" fill="#bfbfbf"/><rect x="12" y="12" width="4" height="4" fill="#bfbfbf"/></svg>
<div class="a" style="left:2560px;top:1px;width:1px;height:1656px;background:#c4c4c8;"></div>
<div class="a" style="left:0px;top:0px;width:2562px;height:1658px;border:1px solid #9a9aa0;"></div>
</body></html>
